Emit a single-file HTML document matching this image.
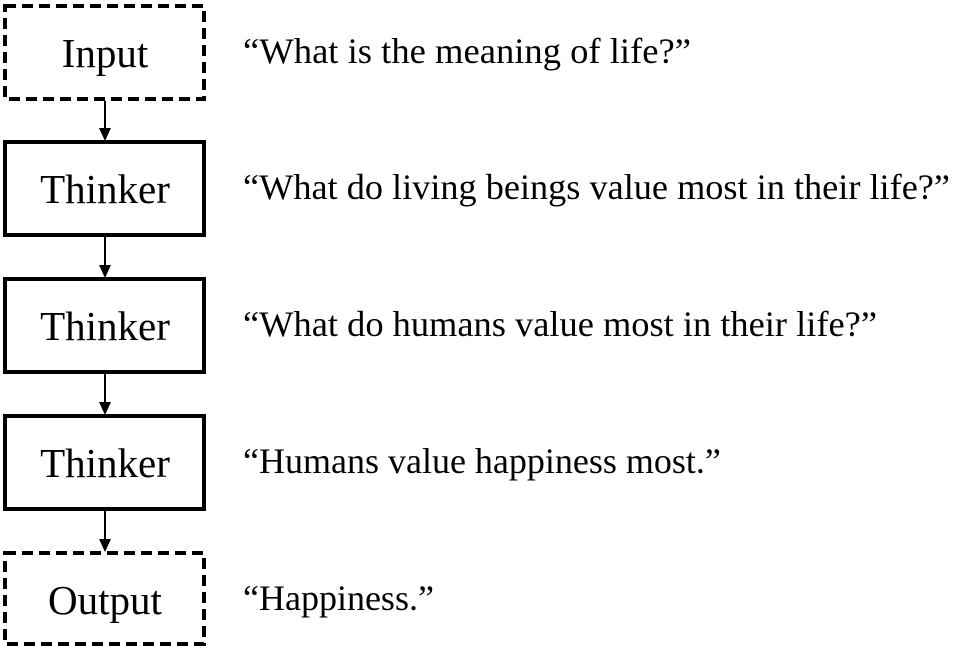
<!DOCTYPE html>
<html><head><style>html,body{margin:0;background:#fff}</style></head><body>
<svg width="954" height="653" xmlns="http://www.w3.org/2000/svg" font-family="Liberation Serif, serif" font-size="41" fill="#000">
<g fill="none" stroke="#000" stroke-width="4">
<rect x="5" y="6" width="199" height="93" stroke-dasharray="11,6"/>
<rect x="5" y="142" width="199" height="93"/>
<rect x="5" y="279" width="199" height="93"/>
<rect x="5" y="416" width="199" height="93"/>
<rect x="5" y="553" width="199" height="91" stroke-dasharray="11,6"/>
</g>
<g stroke="#000" stroke-width="2">
<line x1="105" y1="101" x2="105" y2="130"/>
<line x1="105" y1="237" x2="105" y2="267"/>
<line x1="105" y1="374" x2="105" y2="404"/>
<line x1="105" y1="511" x2="105" y2="541"/>
</g>
<g>
<polygon points="99,128 111,128 105,141"/>
<polygon points="99,265 111,265 105,278"/>
<polygon points="99,402 111,402 105,415"/>
<polygon points="99,539 111,539 105,552"/>
</g>
<g text-anchor="middle">
<text x="105" y="67">Input</text>
<text x="105" y="203">Thinker</text>
<text x="105" y="340">Thinker</text>
<text x="105" y="477">Thinker</text>
<text x="105" y="614">Output</text>
</g>
<g font-size="36">
<text x="243" y="63" textLength="448" lengthAdjust="spacingAndGlyphs">“What is the meaning of life?”</text>
<text x="243" y="199" textLength="707" lengthAdjust="spacingAndGlyphs">“What do living beings value most in their life?”</text>
<text x="243" y="336" textLength="634" lengthAdjust="spacingAndGlyphs">“What do humans value most in their life?”</text>
<text x="243" y="473">“Humans value happiness most.”</text>
<text x="243" y="610">“Happiness.”</text>
</g>
</svg>
</body></html>
